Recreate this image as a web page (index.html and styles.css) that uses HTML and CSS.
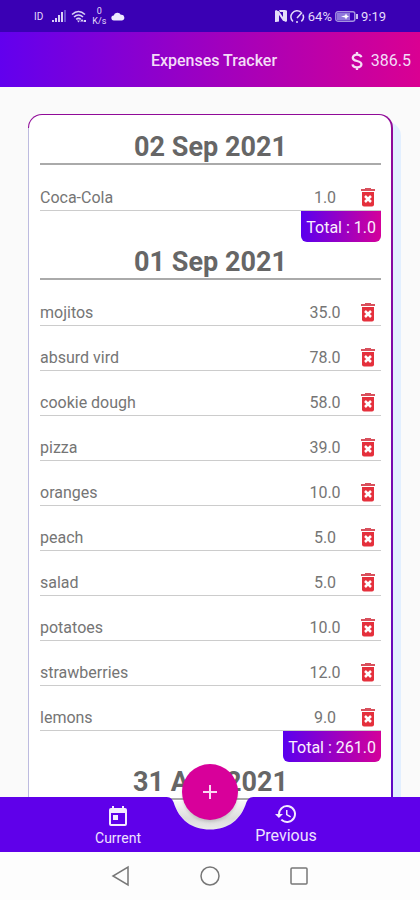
FILE: index.html
```html
<!DOCTYPE html>
<html lang="en">
<head>
<meta charset="utf-8">
<meta name="viewport" content="width=device-width, initial-scale=1">
<title>Expenses Tracker</title>
<link rel="stylesheet" href="styles.css">
</head>
<body>
<svg class="defs" aria-hidden="true">
  <symbol id="trash" viewBox="0 0 16 20">
    <path fill="#d9505c" d="M5 0h6v1h4v2H1V1h4z"/>
    <path fill="#e5303c" d="M2 4h12v12.500a2 2 0 0 1-2 2H4a2 2 0 0 1-2-2z"/>
    <path stroke="#fff" stroke-width="2.500" d="M5 8l6 6M11 8l-6 6"/>
  </symbol>
</svg>

<div class="status">
  <div class="status-group">
    <span class="carrier">ID</span>
    <svg class="signal" width="14" height="12" viewBox="0 0 14 12"><path fill="#d8d0f6" d="M0 10h2v2H0zM3 8h2v4H3zM6 5h2v7H6zM9 2h2v10H9z"/><path fill="#6a4fd0" d="M12 0h2v12h-2z"/></svg>
    <svg width="16" height="13" viewBox="0 0 16 13" fill="none" stroke="#d8d0f6" stroke-width="1.600"><path d="M1 4.500q6.500-6 13 0M3 7q4.500-4 9 0M5.200 9.300q2.300-2 4.600 0"/><path fill="#d8d0f6" stroke="none" d="M6 10.500h3L7.500 12.500zM11 9l2 2.500h-4zM13 10h2v2h-2z"/></svg>
    <span class="speed"><span>0</span><span>K/s</span></span>
    <svg width="14" height="9" viewBox="0 0 14 9"><path fill="#eee9ff" d="M3 8.500a2.500 2.500 0 0 1-.3-5A3.800 3.800 0 0 1 9.800 2.800 2.900 2.900 0 0 1 11 8.500z"/></svg>
  </div>
  <div class="status-group">
    <svg width="12" height="12" viewBox="0 0 12 12"><path fill="#e4dcfa" d="M1 0l3 1.500v10L1 12H0V1zM11 0l1 1v10l-1 1-3-1.500V1zM4 0h6v2H5z"/><path stroke="#e4dcfa" stroke-width="2.200" d="M3 1.500l6 9"/></svg>
    <svg width="15" height="13" viewBox="0 0 15 13" fill="none" stroke="#e4dcfa" stroke-width="1.500"><path d="M3 11.500A5.500 5.500 0 1 1 11 2.300M12.800 4.500a5.500 5.500 0 0 1-1.500 6.800M7 8l5-5.500M6 12h2"/></svg>
    <span>64%</span>
    <svg class="battery" width="23" height="11" viewBox="0 0 23 11"><rect x=".8" y=".8" width="19" height="9.400" rx="2" fill="#3a00b8" stroke="#a594e0" stroke-width="1.400"/><path fill="#8f78dc" d="M2 2h13v7H2z"/><path fill="#fff" d="M6 5.500l4-1 1-2 1 2 2 1-2 1-1 2-1-2z"/><path fill="#c9bcf0" d="M21 3h2v5h-2z"/></svg>
    <span>9:19</span>
  </div>
</div>

<header class="header">
  <h1 class="title">Expenses Tracker</h1>
  <div class="balance">
    <svg width="12" height="20" viewBox="0 0 12 20" fill="none" stroke="#f6dcf5" stroke-width="2.300"><path d="M10.300 6.300C10 4.500 8.300 3.700 6 3.700S1.800 4.800 1.800 6.700 3.500 9.400 6 10s4.400 1.300 4.400 3.300-1.900 3-4.400 3-4.200-1-4.500-2.900M6 1v3M6 16v3"/></svg>
    <span>386.5</span>
  </div>
</header>

<main class="content">
  <div class="card">
    <section class="day">
      <h2 class="date">02 Sep 2021</h2>
      <ul class="list">
        <li class="row"><span class="name">Coca-Cola</span><span class="amount">1.0</span><button class="delete" aria-label="Delete Coca-Cola"><svg><use href="#trash"/></svg></button></li>
      </ul>
      <div class="total">Total : 1.0</div>
    </section>
    <section class="day">
      <h2 class="date">01 Sep 2021</h2>
      <ul class="list">
        <li class="row"><span class="name">mojitos</span><span class="amount">35.0</span><button class="delete" aria-label="Delete mojitos"><svg><use href="#trash"/></svg></button></li>
        <li class="row"><span class="name">absurd vird</span><span class="amount">78.0</span><button class="delete" aria-label="Delete absurd vird"><svg><use href="#trash"/></svg></button></li>
        <li class="row"><span class="name">cookie dough</span><span class="amount">58.0</span><button class="delete" aria-label="Delete cookie dough"><svg><use href="#trash"/></svg></button></li>
        <li class="row"><span class="name">pizza</span><span class="amount">39.0</span><button class="delete" aria-label="Delete pizza"><svg><use href="#trash"/></svg></button></li>
        <li class="row"><span class="name">oranges</span><span class="amount">10.0</span><button class="delete" aria-label="Delete oranges"><svg><use href="#trash"/></svg></button></li>
        <li class="row"><span class="name">peach</span><span class="amount">5.0</span><button class="delete" aria-label="Delete peach"><svg><use href="#trash"/></svg></button></li>
        <li class="row"><span class="name">salad</span><span class="amount">5.0</span><button class="delete" aria-label="Delete salad"><svg><use href="#trash"/></svg></button></li>
        <li class="row"><span class="name">potatoes</span><span class="amount">10.0</span><button class="delete" aria-label="Delete potatoes"><svg><use href="#trash"/></svg></button></li>
        <li class="row"><span class="name">strawberries</span><span class="amount">12.0</span><button class="delete" aria-label="Delete strawberries"><svg><use href="#trash"/></svg></button></li>
        <li class="row"><span class="name">lemons</span><span class="amount">9.0</span><button class="delete" aria-label="Delete lemons"><svg><use href="#trash"/></svg></button></li>
      </ul>
      <div class="total">Total : 261.0</div>
    </section>
    <section class="day">
      <h2 class="date">31 Aug 2021</h2>
    </section>
  </div>
</main>

<nav class="nav">
  <div class="bar">
    <span class="bar-side"></span>
    <svg class="notch" width="90" height="55" viewBox="0 0 90 55">
      <defs><linearGradient id="shade" x1="0" y1="0" x2="0" y2="1"><stop offset="0" stop-color="#f8f8f8"/><stop offset=".6" stop-color="#dcdcdc"/><stop offset="1" stop-color="#ebebeb"/></linearGradient></defs>
      <path fill="url(#shade)" d="M8 4H82C76 22 63 33 45 33S14 22 8 4z"/>
      <path fill="#5f00ea" d="M0 0C5 0 6.500 1 8.500 5C14 23 27 32.500 45 32.500S76 23 81.500 5C83.500 1 85 0 90 0V55H0z"/>
    </svg>
    <span class="bar-side"></span>
  </div>
  <div class="tabs">
    <a class="tab" href="#current">
      <svg width="24" height="24" viewBox="0 0 24 24" fill="#f3eaff"><path fill-rule="evenodd" d="M6 2h2v2h8V2h2v2h1a2 2 0 0 1 2 2v14a2 2 0 0 1-2 2H5a2 2 0 0 1-2-2V6a2 2 0 0 1 2-2h1zM5 9v11h14V9z"/><path d="M7 11h5v5H7z"/></svg>
      <span class="tab-label">Current</span>
    </a>
    <a class="tab active" href="#previous">
      <svg width="24" height="24" viewBox="0 0 24 24" fill="#f3eaff"><path d="M13 3a9 9 0 0 0-9 9H1l3.900 3.900L9 12H6a7 7 0 1 1 2.060 4.940l-1.420 1.420A9 9 0 1 0 13 3zm-1 5v5l4.280 2.540.72-1.210-3.500-2.080V8z"/></svg>
      <span class="tab-label">Previous</span>
    </a>
  </div>
  <button class="fab" aria-label="Add expense"><svg width="16" height="16" viewBox="0 0 16 16"><path stroke="#fbd9f3" stroke-width="2" d="M8 1v14M1 8h14"/></svg></button>
</nav>

<div class="system">
  <svg width="20" height="22" viewBox="0 0 20 22"><path d="M18 2v18L3 11z"/></svg>
  <svg width="22" height="22" viewBox="0 0 22 22"><circle cx="11" cy="11" r="9"/></svg>
  <svg width="20" height="22" viewBox="0 0 20 22"><rect x="1" y="3" width="16" height="16" rx="1"/></svg>
</div>
</body>
</html>
```

FILE: styles.css
```css
* {
  box-sizing: border-box;
}

body {
  margin: 0;
  height: 100vh;
  display: grid;
  grid-template-columns: minmax(0, 1fr);
  grid-template-rows: 32px 55px minmax(0, 1fr) 55px 48px;
  background: #fafafa;
  font-family: Roboto, "Liberation Sans", sans-serif;
  color: #757575;
}

.status,
.header,
.content,
.nav,
.system {
  grid-column: 1;
}

svg {
  flex: none;
}

.defs {
  position: absolute;
  width: 0;
  height: 0;
}

.status {
  grid-row: 1;
  display: flex;
  align-items: center;
  justify-content: space-between;
  padding: 0 34px;
  background: #3a00b4;
  color: #e4dcfa;
  font-size: 13px;
}

.status-group {
  display: flex;
  align-items: center;
  gap: 3px;
}

.status-group:first-child {
  gap: 5px;
}

.signal {
  margin-left: 4px;
}

.carrier {
  font-size: 10px;
}

.speed {
  display: flex;
  flex-direction: column;
  align-items: center;
  font-size: 9px;
  line-height: 10px;
}

.header {
  grid-row: 2;
  display: grid;
  grid-template-columns: 1fr auto 1fr;
  align-items: center;
  padding: 2px 9px 0;
  background: linear-gradient(90deg, #6200ee, #da0092);
  color: #f3dcf7;
}

.title {
  grid-column: 2;
  margin: 0;
  padding-left: 8px;
  font-size: 16px;
  font-weight: 500;
  line-height: 20px;
}

.balance {
  display: flex;
  align-items: center;
  justify-content: flex-end;
  gap: 8px;
  font-size: 16px;
}

.content {
  grid-row: 3 / 5;
  overflow: hidden auto;
  scrollbar-width: none;
  padding: 27px 27px 0 28px;
}

.card {
  min-height: 100%;
  padding: 12px 10px 24px 11px;
  border: solid transparent;
  border-width: 1px 2px 1px 1px;
  border-radius: 14px;
  background:
    linear-gradient(#fff, #fff) padding-box,
    linear-gradient(#bdbbdf, #bdbbdf) 0 14px / 3px 100% no-repeat border-box,
    linear-gradient(#900a98, #5a0ac8) border-box;
  box-shadow: 8px 8px 0 #e2efff;
}

.day {
  display: flex;
  flex-direction: column;
}

.date {
  margin: 0;
  height: 38px;
  padding-top: 4px;
  border-bottom: 2px solid #aaa;
  font-size: 27px;
  font-weight: 700;
  line-height: 32px;
  text-align: center;
  color: #666;
}

.list {
  margin: 0;
  padding: 1px 0 0;
  list-style: none;
}

.row {
  display: grid;
  grid-template-columns: 1fr 60px 26px;
  align-items: end;
  height: 45px;
  padding-bottom: 2px;
  border-bottom: 1px solid #ccc;
  font-size: 16px;
  line-height: 20px;
}

.amount {
  text-align: center;
}

.delete {
  display: flex;
  justify-content: center;
  padding: 0;
  border: 0;
  background: none;
}

.delete svg {
  width: 16px;
  height: 20px;
}

.total {
  align-self: flex-end;
  height: 31px;
  padding: 0 5px;
  border-radius: 0 0 6px 6px;
  background: linear-gradient(90deg, #5a00ee, #d4009a);
  color: #fbeefd;
  font-size: 16px;
  line-height: 33px;
}

.nav {
  grid-row: 4;
  z-index: 1;
  display: grid;
  grid-template-columns: minmax(0, 1fr);
}

.bar,
.tabs,
.fab {
  grid-area: 1 / 1;
}

.bar {
  display: flex;
}

.bar-side {
  flex: 1;
  background: #5f00ea;
}

.notch {
  display: block;
}

.tabs {
  display: flex;
  justify-content: center;
  gap: 84px;
  padding-right: 16px;
}

.tab {
  display: flex;
  flex-direction: column;
  align-items: center;
  width: 84px;
  padding-top: 7px;
  color: #efe3ff;
  font-size: 14px;
  line-height: 20px;
  text-decoration: none;
}

.tab.active {
  padding-top: 5px;
  font-size: 16px;
}

.fab {
  justify-self: center;
  display: grid;
  place-items: center;
  width: 56px;
  height: 56px;
  margin-top: -33px;
  padding: 0;
  border: 0;
  border-radius: 50%;
  background: #d8009a;
  box-shadow: 0 2px 3px #0002;
}

.system {
  grid-row: 5;
  display: flex;
  align-items: center;
  justify-content: center;
  gap: 69px;
  background: #fdfdfd;
}

.system svg {
  fill: none;
  stroke: #777;
  stroke-width: 1.5px;
}
```
